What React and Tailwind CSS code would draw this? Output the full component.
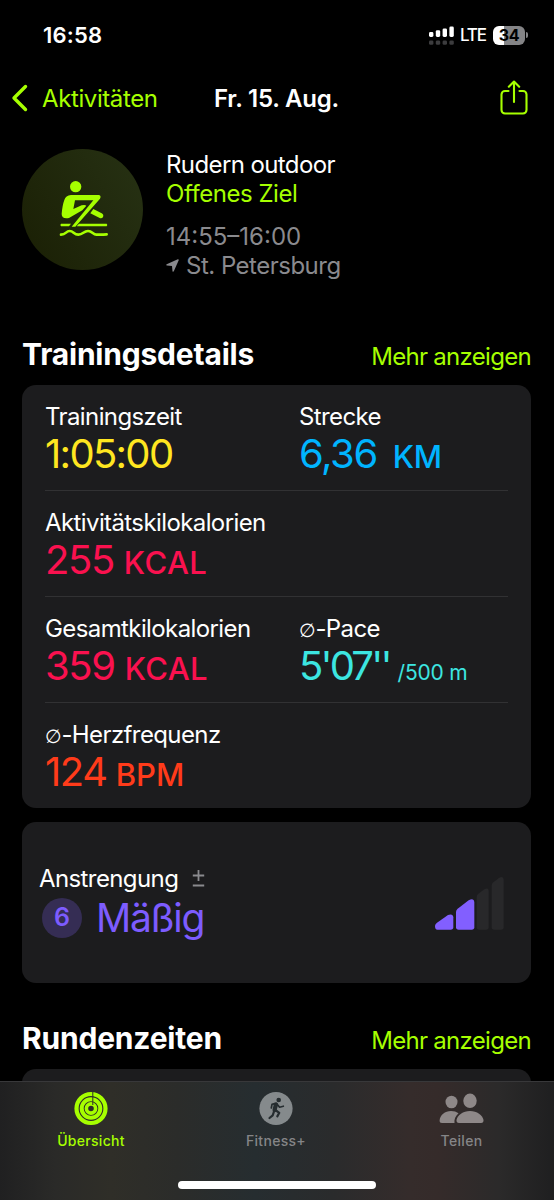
const GREEN = '#a6ff00';

function StatusBar() {
  return (
    <div className="flex h-[71px] items-center justify-between pl-[43px] pr-[26px]">
      <span className="text-[22px] font-semibold tracking-[0.2px]">16:58</span>
      <div className="flex items-center">
        <svg width="25" height="20" viewBox="0 0 25 20" className="mr-[6px]">
          {[0, 1, 2, 3].map((i) => (
            <g key={i}>
              <rect x={i * 6.8} y={6 - i * 1.8} width="4.4" height={5 + i * 1.8} rx="1.4" fill="#fff" />
              <rect x={i * 6.8} y="14.4" width="4.4" height="4.4" rx="1.4" fill="#3c3c3e" />
            </g>
          ))}
        </svg>
        <span className="mr-[7px] text-[17px] font-medium tracking-[-1.1px]">LTE</span>
        <div className="mb-[1px] flex h-[19px] w-[32px] items-center justify-center rounded-[6px] bg-[linear-gradient(90deg,#fff_34%,#848486_34%)]">
          <span className="text-[16px] font-bold leading-none tracking-[-0.3px] text-black">34</span>
        </div>
        <div className="mb-[1px] ml-[1px] h-[6px] w-[2px] rounded-r-full bg-[#848486]" />
      </div>
    </div>
  );
}

function NavBar() {
  return (
    <div className="flex h-[56px] items-center">
      <div className="flex w-[214px] items-center pl-[11px]">
        <svg width="18" height="30" viewBox="0 0 18 30" className="mb-[2px]" fill="none" stroke={GREEN} strokeWidth="3.4" strokeLinecap="round" strokeLinejoin="round">
          <path d="M14.500 3.500 3 15l11.500 11.500" />
        </svg>
        <span className="ml-[13px] text-[24px] tracking-[-0.4px] text-[#a6ff00]">Aktivitäten</span>
      </div>
      <span className="text-[24px] font-semibold tracking-[-0.2px]">Fr. 15. Aug.</span>
      <svg width="28" height="36" viewBox="0 0 28 36" className="mb-[5px] ml-auto mr-[26px]" fill="none" stroke={GREEN} strokeWidth="2.1" strokeLinecap="round" strokeLinejoin="round">
        <path d="M8.500 12H5A3.500 3.500 0 0 0 1.500 15.500v15.500A3.500 3.500 0 0 0 5 34.500h18a3.500 3.500 0 0 0 3.500-3.500V15.500a3.500 3.500 0 0 0-3.500-3.500h-3.500" />
        <path d="M14 23V2.500M8.800 7.700 14 2.500 19.200 7.700" />
      </svg>
    </div>
  );
}

function RowingIcon() {
  return (
    <svg width="50" height="57" viewBox="146 120 150 171" className="mb-[2px] ml-[2px]" fill={GREEN}>
      <circle cx="196" cy="140" r="17" />
      <path d="M182 165H264Q274 166 269 176L195 260H184L249 181H194L189 207L214 196Q224 193 228 197L216 211L176 234Q154 238 154 222Q156 196 162 180Q166 166 182 165Z" />
      <path d="M249 207 274 220Q281 224 278 231Q275 236 268 234L240 220Z" />
      <path d="M152 251H182L176 259H152Q148 255 152 251ZM206 251H289Q293 255 289 259H199Z" />
      <path d="M152 284C168 284 166 273 178 273S190 284 204 284 220 273 233 273 248 284 258 284 268 284 289 283" fill="none" stroke={GREEN} strokeWidth="8" strokeLinecap="round" />
    </svg>
  );
}

function WorkoutHeader() {
  return (
    <div className="flex pl-[22px] pt-[22px]">
      <div className="flex h-[121px] w-[121px] items-center justify-center rounded-full bg-[linear-gradient(60deg,#1a1f04,#273214)]">
        <RowingIcon />
      </div>
      <div className="ml-[23px] pt-[1px] text-[24px] leading-[29px]">
        <p className="tracking-[-0.6px]">Rudern outdoor</p>
        <p className="tracking-[-0.45px] text-[#a6ff00]">Offenes Ziel</p>
        <p className="mt-[14px] text-[#8a8a8e]">14:55–16:00</p>
        <p className="flex items-center tracking-[-0.5px] text-[#8a8a8e]">
          <svg width="13" height="13" viewBox="0 0 13 13" className="mr-[7px]" fill="#8a8a8e">
            <path d="M11.800.300.700 5.200Q-.200 6 .800 6.500L6 7 6.500 12.200Q7 13.200 7.800 12.300L12.700 1.200Q12.900.100 11.800.300Z" />
          </svg>
          St. Petersburg
        </p>
      </div>
    </div>
  );
}

function SectionTitle({ children }) {
  return (
    <div className="flex h-[40px] items-center justify-between">
      <h2 className="text-[30px] font-bold tracking-[-0.2px]">{children}</h2>
      <span className="pt-[5px] text-[24px] tracking-[-0.7px] text-[#a6ff00]">Mehr anzeigen</span>
    </div>
  );
}

function Metric({
  label,
  value,
  unit,
  color,
  avg,
  valueClass = 'tracking-[-1.4px]',
  unitClass = 'ml-[10px] text-[31px] font-medium tracking-[0.4px]',
}) {
  return (
    <div>
      <p className="text-[24px] leading-[30px] tracking-[-0.6px]">
        {avg && <span className="font-['DejaVu_Sans'] text-[19px] font-extralight leading-none">∅</span>}
        {label}
      </p>
      <p className={`flex items-baseline text-[40px] leading-[44px] ${color}`}>
        <span className={valueClass}>{value}</span>
        {unit && <span className={unitClass}>{unit}</span>}
      </p>
    </div>
  );
}

const rows = [
  [
    { label: 'Trainingszeit', value: '1:05:00', color: 'text-[#ffe620]', valueClass: 'tracking-[-1.7px]' },
    { label: 'Strecke', value: '6,36', unit: 'KM', color: 'text-[#00b4ff]', unitClass: 'ml-[16px] text-[31px] font-medium tracking-[-0.5px]' },
  ],
  [{ label: 'Aktivitätskilokalorien', value: '255', unit: 'KCAL', color: 'text-[#fa114f]' }],
  [
    { label: 'Gesamtkilokalorien', value: '359', unit: 'KCAL', color: 'text-[#fa114f]' },
    {
      label: '-Pace',
      avg: true,
      value: "5'07''",
      unit: '/500 m',
      color: 'text-[#3ce6e1]',
      valueClass: 'tracking-[-2.8px]',
      unitClass: 'ml-[8px] text-[21px] tracking-[-0.2px]',
    },
  ],
  [{ label: '-Herzfrequenz', avg: true, value: '124', unit: 'BPM', color: 'text-[#ff3b1a]', unitClass: 'ml-[9px] text-[31px] font-medium' }],
];

function DetailsCard() {
  return (
    <div className="h-[423px] rounded-[14px] bg-[#1c1c1e] px-[23px]">
      {rows.map((row, i) => (
        <div key={i} className="grid h-[106px] grid-cols-[254px_1fr] border-b border-[#313133] pt-[17px] last:border-b-0">
          {row.map((m) => (
            <Metric key={m.label} {...m} />
          ))}
        </div>
      ))}
    </div>
  );
}

function EffortCard() {
  return (
    <div className="mt-[14px] flex h-[161px] items-center justify-between rounded-[14px] bg-[#1c1c1e] pl-[17px] pr-[27px]">
      <div>
        <p className="flex items-center text-[24px] leading-[30px] tracking-[-0.6px]">
          Anstrengung
          <svg width="13" height="17" viewBox="0 0 13 17" className="ml-[14px]" fill="none" stroke="#8a8a8e" strokeWidth="1.8">
            <path d="M6.500 0v11M.800 5.500h11.400M.800 15.500h11.400" />
          </svg>
        </p>
        <div className="flex items-center text-[#7d5cff]">
          <span className="ml-[3px] flex h-[40px] w-[40px] items-center justify-center rounded-full bg-[#352d54] text-[25px] font-semibold">6</span>
          <span className="ml-[14px] text-[39px] leading-[48px] tracking-[-1.3px]">Mäßig</span>
        </div>
      </div>
      <svg width="70" height="54" viewBox="0 0 210 162">
        <path d="M3 150Q3 145 8 141L42 117Q57 112 58 124V154Q58 161 50 161H10Q3 161 3 150Z" fill="#825fff" />
        <path d="M66 108Q66 102 71 98L104 73Q120 65 121 78V154Q121 161 113 161H74Q66 161 66 154Z" fill="#825fff" />
        <path d="M128 63Q128 57 133 53L149 41Q163 32 164 44V154Q164 161 156 161H136Q128 161 128 154Z" fill="#28282a" />
        <path d="M173 29Q173 23 178 19L194 7Q208-2 209 11V154Q209 161 201 161H181Q173 161 173 154Z" fill="#28282a" />
      </svg>
    </div>
  );
}

function RingsIcon() {
  return (
    <svg width="34" height="35" viewBox="0 0 34 35" fill="none" stroke={GREEN}>
      <circle cx="17" cy="17.500" r="14.500" strokeWidth="4.200" />
      <circle cx="17" cy="17.500" r="9.300" strokeWidth="4" />
      <circle cx="17" cy="17.500" r="4.600" strokeWidth="3.600" />
      <path d="M18.800 0v14" stroke="#2e2e28" strokeWidth="1" />
    </svg>
  );
}

function RunnerIcon() {
  return (
    <svg width="34" height="35" viewBox="0 0 34 35">
      <circle cx="17" cy="17.500" r="16.600" fill="#858a8c" />
      <circle cx="19.700" cy="9" r="2.300" fill="#262d30" />
      <g fill="none" stroke="#262d30" strokeLinecap="round" strokeLinejoin="round">
        <path d="M17 13.300 15.600 19" strokeWidth="4.200" />
        <path d="M15.800 12.600 13 13.400 12.300 17M18.400 13.600 20.600 16.200 24.300 15.200" strokeWidth="1.700" />
        <path d="M17 19.500 20.300 21.800 18.300 25.400M15 20.500 13.700 24.300 10.500 27" strokeWidth="2.200" />
      </g>
    </svg>
  );
}

function PeopleIcon() {
  return (
    <svg width="45" height="35" viewBox="0 0 45 35" fill="#8e8888">
      <ellipse cx="12.500" cy="11" rx="6" ry="6.300" />
      <ellipse cx="31" cy="9.800" rx="6.700" ry="7.300" />
      <path d="M3 32Q.500 32 .600 29.500C1 24 6 20 12 20Q16.500 20 19.500 22.200C16.500 25 15 28 15.500 32Z" />
      <path d="M20 32Q17.300 32 17.500 29C18.500 24 24 20 31 20S43.500 24 44.500 29Q44.700 32 42 32Z" />
    </svg>
  );
}

function TabBar() {
  return (
    <div className="absolute inset-x-0 bottom-0 h-[119px] border-t border-[#38383a] bg-[linear-gradient(90deg,#202021_0%,#2a2a28_10%,#2f2e28_20%,#2b2c2a_32%,#262d30_46%,#2a2b2c_60%,#352c2b_74%,#352b2a_79%,#2b2a2a_90%,#1f1f20_100%)] text-[#858587]">
      <div className="grid grid-cols-[182px_188px_183px] pt-[9px] text-center text-[14px] font-medium leading-[20px] tracking-[0.3px]">
        <div className="flex flex-col items-center gap-[5px] text-[#a6ff00]">
          <RingsIcon />
          Übersicht
        </div>
        <div className="flex flex-col items-center gap-[5px]">
          <RunnerIcon />
          Fitness+
        </div>
        <div className="flex flex-col items-center gap-[5px]">
          <PeopleIcon />
          Teilen
        </div>
      </div>
      <div className="mx-auto mt-[30px] h-[8px] w-[198px] rounded-full bg-white" />
    </div>
  );
}

export default function App() {
  return (
    <div className="relative h-[1200px] w-[554px] overflow-hidden bg-black font-['Inter',sans-serif] text-white">
      <StatusBar />
      <NavBar />
      <WorkoutHeader />
      <main className="pl-[22px] pr-[23px] pt-[54px]">
        <SectionTitle>Trainingsdetails</SectionTitle>
        <div className="mt-[11px]">
          <DetailsCard />
        </div>
        <EffortCard />
        <div className="mt-[35px]">
          <SectionTitle>Rundenzeiten</SectionTitle>
        </div>
        <div className="mt-[11px] h-[160px] rounded-[14px] bg-[#1c1c1e]" />
      </main>
      <TabBar />
    </div>
  );
}
